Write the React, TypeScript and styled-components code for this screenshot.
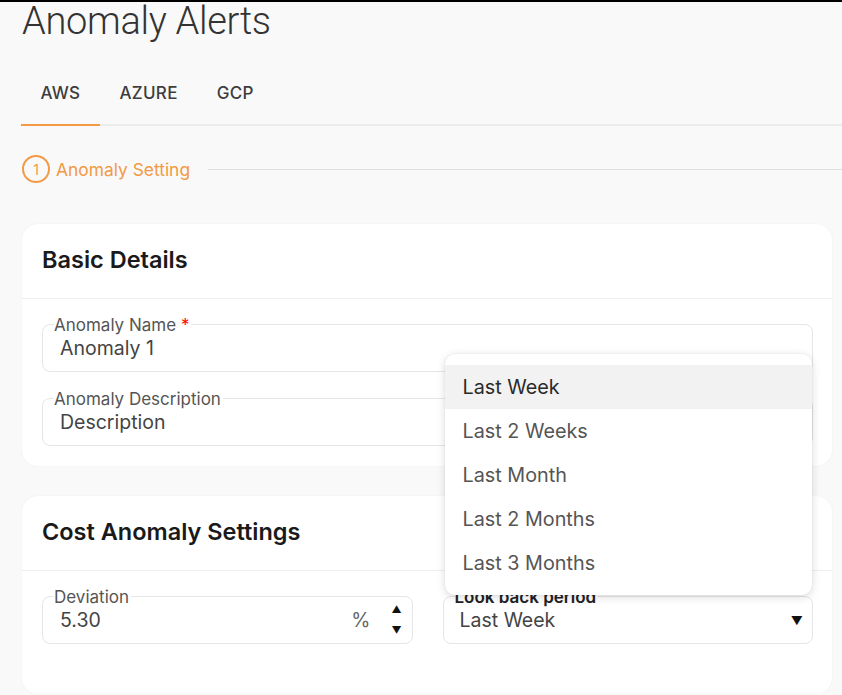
import styled, { createGlobalStyle } from 'styled-components';

const GlobalStyle = createGlobalStyle`
  html, body {
    margin: 0;
    padding: 0;
    background: #f9f9f9;
  }
  body {
    font-family: "Inter", sans-serif;
    color: #333;
    overflow: hidden;
  }
`;

const ORANGE = '#f29a45';

const periods = ['Last Week', 'Last 2 Weeks', 'Last Month', 'Last 2 Months', 'Last 3 Months'];

const TabBar = ({ tabs, active }: { tabs: string[]; active: string }) => (
  <Tabs>
    {tabs.map((tab) => (
      <Tab key={tab} active={tab === active}>
        {tab}
      </Tab>
    ))}
  </Tabs>
);

interface FieldProps {
  label: string;
  required?: boolean;
  strongLabel?: boolean;
  children: React.ReactNode;
}

const Field = ({ label, required, strongLabel, children }: FieldProps) => (
  <Outline>
    <Legend strong={strongLabel}>
      {label}
      {required && <Star> *</Star>}
    </Legend>
    {children}
  </Outline>
);

const App = () => {
  return (
    <>
      <GlobalStyle />
      <Page>
        <Title>Anomaly Alerts</Title>
        <TabBar tabs={['AWS', 'AZURE', 'GCP']} active="AWS" />

        <Stepper>
          <StepCircle>1</StepCircle>
          <StepLabel>Anomaly Setting</StepLabel>
          <StepLine />
        </Stepper>

        <Card>
          <CardHeader>Basic Details</CardHeader>
          <CardBody>
            <Field label="Anomaly Name" required>
              <Value>Anomaly 1</Value>
            </Field>
            <Field label="Anomaly Description">
              <Value>Description</Value>
            </Field>
          </CardBody>
        </Card>

        <Card tall>
          <CardHeader>Cost Anomaly Settings</CardHeader>
          <CardBody>
            <Row>
              <Field label="Deviation">
                <Value>5.30</Value>
                <Unit>%</Unit>
                <Spinner>
                  <span>▲</span>
                  <span>▼</span>
                </Spinner>
              </Field>
              <Field label="Look back period" strongLabel>
                <SelectValue>Last Week</SelectValue>
                <Caret>▼</Caret>
                <Menu>
                  {periods.map((p, i) => (
                    <MenuItem key={p} selected={i === 0}>
                      {p}
                    </MenuItem>
                  ))}
                </Menu>
              </Field>
            </Row>
          </CardBody>
        </Card>
      </Page>
    </>
  );
};

const Page = styled.div`
  border-top: 2px solid #000;
  padding: 0 10px 0 22px;
  height: 693px;
  box-sizing: border-box;
`;

const Title = styled.h1`
  margin: 0;
  font-family: Roboto, sans-serif;
  font-weight: 300;
  font-size: 38px;
  line-height: 38px;
  color: #333;
  letter-spacing: -0.3px;
`;

const Tabs = styled.div`
  display: flex;
  margin: 22px -10px 0 -1px;
  border-bottom: 2px solid #ececec;
`;

const Tab = styled.div<{ active: boolean }>`
  padding: 0 19.5px;
  height: 62px;
  display: flex;
  align-items: center;
  font-weight: 500;
  font-size: 17px;
  letter-spacing: 0.3px;
  color: #3d3d3d;
  margin-bottom: -2px;
  border-bottom: 2px solid ${(p) => (p.active ? ORANGE : 'transparent')};
`;

const Stepper = styled.div`
  display: flex;
  align-items: center;
  margin-top: 29px;
  margin-right: -10px;
`;

const StepCircle = styled.div`
  width: 24px;
  height: 24px;
  border: 2px solid ${ORANGE};
  border-radius: 50%;
  display: flex;
  align-items: center;
  justify-content: center;
  font-size: 14px;
  color: ${ORANGE};
`;

const StepLabel = styled.span`
  margin-left: 6px;
  font-size: 17.4px;
  color: ${ORANGE};
`;

const StepLine = styled.div`
  flex: 1;
  height: 1px;
  background: #dedede;
  margin-left: 18px;
`;

const Card = styled.section<{ tall?: boolean }>`
  margin-top: ${(p) => (p.tall ? '30px' : '41px')};
  background: #fff;
  border-radius: 16px;
  box-shadow: 0 0 2px rgba(0, 0, 0, 0.06);
  padding-bottom: ${(p) => (p.tall ? '50px' : '20px')};
`;

const CardHeader = styled.h2`
  margin: 0;
  height: 75px;
  box-sizing: border-box;
  display: flex;
  align-items: center;
  padding: 0 20px 4px;
  font-size: 23.5px;
  font-weight: 600;
  color: #1a1a1a;
  border-bottom: 1px solid #efefef;
`;

const CardBody = styled.div`
  display: flex;
  flex-direction: column;
  gap: 26px;
  padding: 25px 19px 0 20px;
`;

const Row = styled.div`
  display: grid;
  grid-template-columns: 1fr 1fr;
  gap: 30px;
`;

const Outline = styled.div`
  position: relative;
  height: 48px;
  box-sizing: border-box;
  border: 1px solid #e6e6e6;
  border-radius: 8px;
  display: flex;
  align-items: center;
  padding: 0 17px;
`;

const Legend = styled.span<{ strong?: boolean }>`
  position: absolute;
  top: -10px;
  left: 11px;
  padding-right: 2px;
  background: #fff;
  font-size: 17px;
  line-height: 20px;
  font-weight: ${(p) => (p.strong ? 600 : 400)};
  color: ${(p) => (p.strong ? '#222' : '#555')};
`;

const Star = styled.span`
  color: #f00;
`;

const Value = styled.span`
  flex: 1;
  font-size: 19.5px;
  color: #444;
`;

const SelectValue = styled(Value)`
  position: relative;
  left: -1px;
`;

const Unit = styled.span`
  font-size: 19.5px;
  color: #666;
  margin-right: 21px;
`;

const Spinner = styled.div`
  display: flex;
  flex-direction: column;
  gap: 12px;
  font-size: 10px;
  line-height: 9px;
  color: #111;
  margin-right: -7px;
`;

const Caret = styled.span`
  font-size: 12px;
  color: #111;
  margin-right: -8px;
`;

const Menu = styled.ul`
  position: absolute;
  left: 1px;
  right: 0;
  bottom: calc(100% + 2px);
  margin: 0;
  padding: 11px 0 10px;
  list-style: none;
  background: #fff;
  border-radius: 10px;
  box-shadow: 0 2px 10px rgba(0, 0, 0, 0.14), 0 0 2px rgba(0, 0, 0, 0.08);
  z-index: 10;
`;

const MenuItem = styled.li<{ selected: boolean }>`
  height: 44px;
  display: flex;
  align-items: center;
  padding-left: 18px;
  font-size: 19.8px;
  color: ${(p) => (p.selected ? '#2a2a2a' : '#555')};
  background: ${(p) => (p.selected ? '#f2f2f2' : 'transparent')};
`;

export default App;
